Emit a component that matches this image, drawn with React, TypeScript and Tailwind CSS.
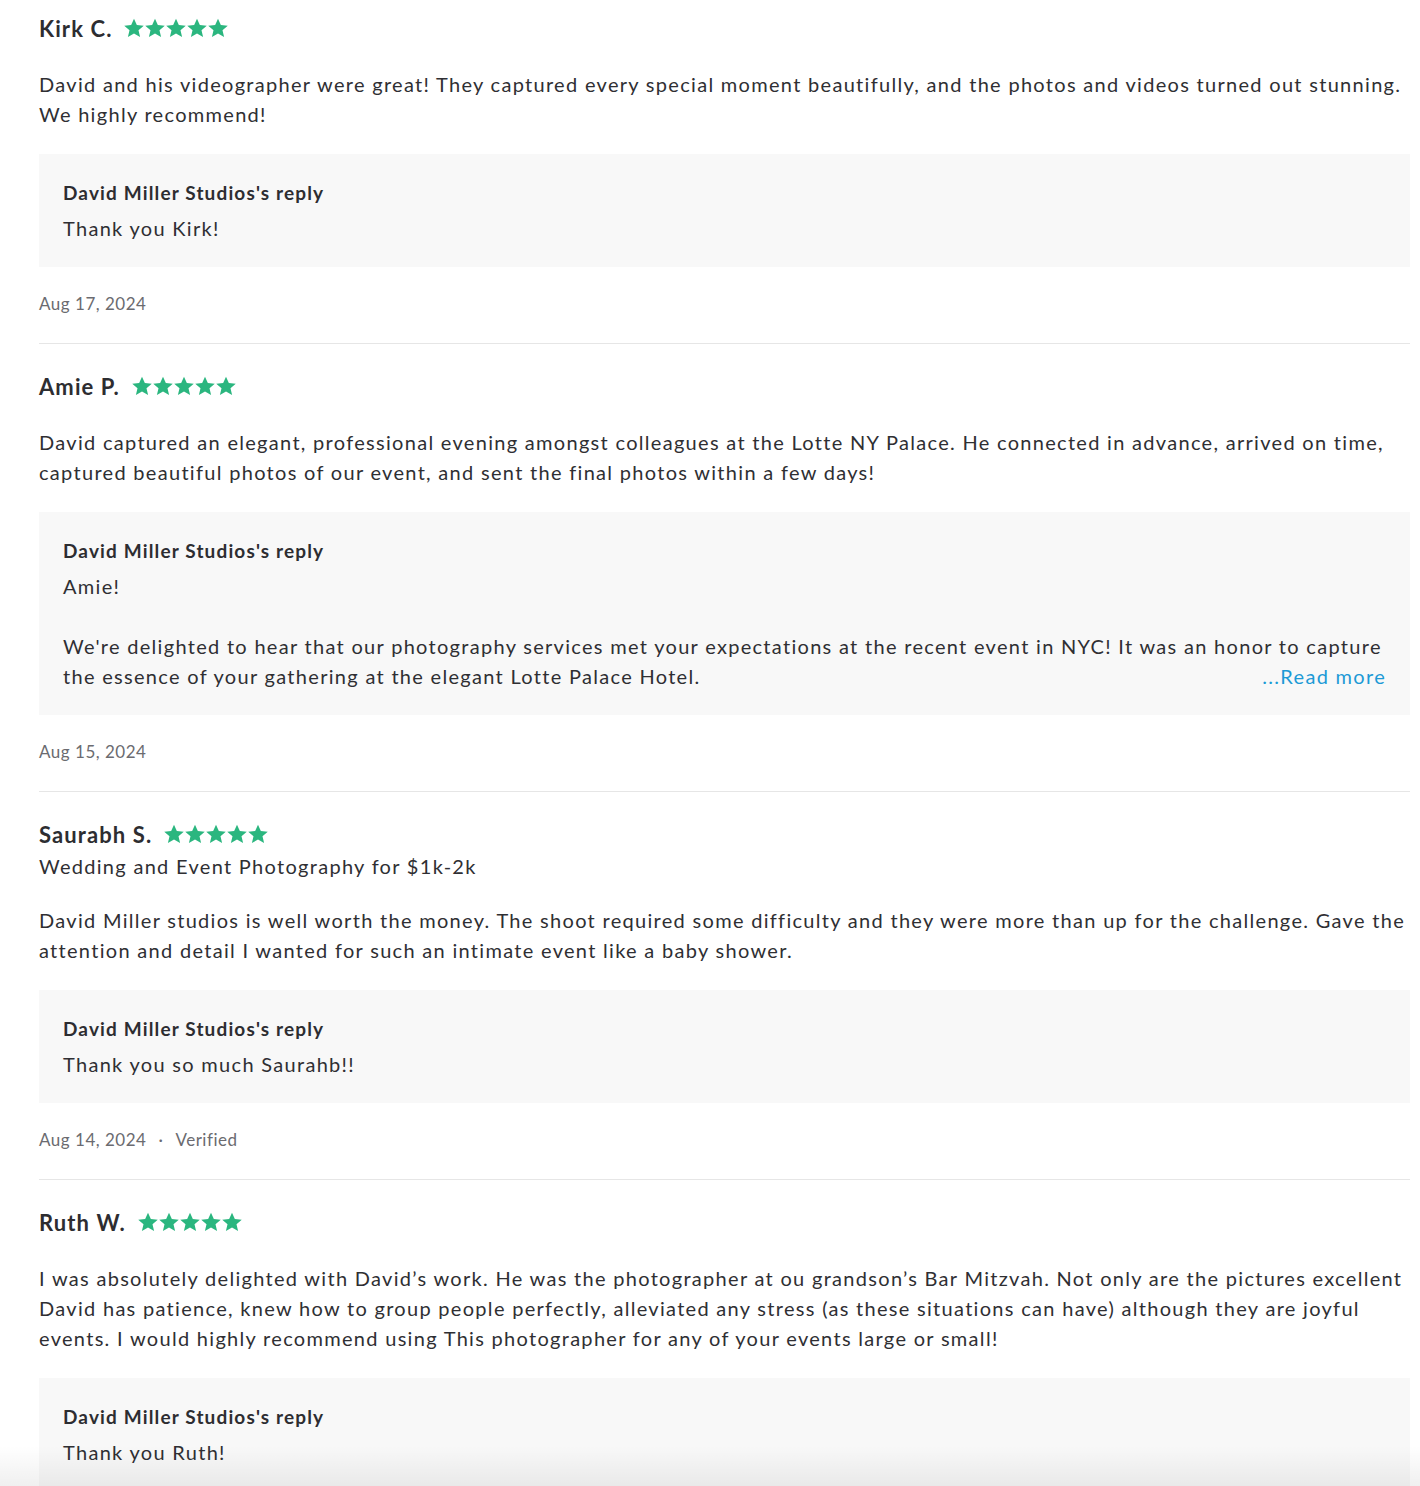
import React from "react";

type Review = {
  name: string;
  subtitle?: string;
  body: string;
  reply: string;
  readMore?: boolean;
  date: string;
  verified?: boolean;
};

const reviews: Review[] = [
  {
    name: "Kirk C.",
    body: "David and his videographer were great! They captured every special moment beautifully, and the photos and videos turned out stunning. We highly recommend!",
    reply: "Thank you Kirk!",
    date: "Aug 17, 2024",
  },
  {
    name: "Amie P.",
    body: "David captured an elegant, professional evening amongst colleagues at the Lotte NY Palace. He connected in advance, arrived on time, captured beautiful photos of our event, and sent the final photos within a few days!",
    reply:
      "Amie!\n\nWe're delighted to hear that our photography services met your expectations at the recent event in NYC! It was an honor to capture the essence of your gathering at the elegant Lotte Palace Hotel.",
    readMore: true,
    date: "Aug 15, 2024",
  },
  {
    name: "Saurabh S.",
    subtitle: "Wedding and Event Photography for $1k-2k",
    body: "David Miller studios is well worth the money. The shoot required some difficulty and they were more than up for the challenge. Gave the attention and detail I wanted for such an intimate event like a baby shower.",
    reply: "Thank you so much Saurahb!!",
    date: "Aug 14, 2024",
    verified: true,
  },
  {
    name: "Ruth W.",
    body: "I was absolutely delighted with David’s work. He was the photographer at ou grandson’s Bar Mitzvah. Not only are the pictures excellent David has patience, knew how to group people perfectly, alleviated any stress (as these situations can have) although they are joyful events. I would highly recommend using This photographer for any of your events large or small!",
    reply: "Thank you Ruth!",
    date: "",
  },
];

function Stars() {
  return (
    <div className="flex items-center gap-[1px]">
      {[0, 1, 2, 3, 4].map((i) => (
        <svg key={i} width="20" height="20" viewBox="0 0 24 24" className="fill-[#2bb67f]">
          <path d="M12 .8l3.4 7.6 8.3.8-6.3 5.5 1.9 8.2L12 18.6l-7.3 4.3 1.9-8.2L.3 9.2l8.3-.8z" />
        </svg>
      ))}
    </div>
  );
}

function ReviewItem({ r, last }: { r: Review; last: boolean }) {
  return (
    <div className={last ? "pt-[27px]" : "pt-[27px] pb-[27px] border-b border-[#e6e6e6]"}>
      <div className="flex items-center gap-3 h-[30px]">
        <span className="text-[22px] font-bold tracking-[0.05em] text-[#2d2d31]">{r.name}</span>
        <Stars />
      </div>
      {r.subtitle && (
        <p className="mt-[2px] text-[20px] leading-[30px] tracking-[0.065em] text-[#2f2f33]">{r.subtitle}</p>
      )}
      <p
        className={`${r.subtitle ? "mt-6" : "mt-[26px]"} text-[20px] leading-[30px] tracking-[0.065em] text-[#2f2f33]`}
      >
        {r.body}
      </p>
      <div className="mt-[25px] bg-[#f8f8f8] px-6 py-6">
        <p className="text-[19px] leading-[30px] font-bold tracking-[0.06em] text-[#2d2d31]">
          David Miller Studios's reply
        </p>
        <div className="relative mt-[5px]">
          <p className="text-[20px] leading-[30px] tracking-[0.065em] text-[#2f2f33] whitespace-pre-line">
            {r.reply}
          </p>
          {r.readMore && (
            <span className="absolute right-0 bottom-0 text-[20px] leading-[30px] tracking-[0.065em] text-[#1c9ad6] bg-[#f8f8f8]">
              ...Read more
            </span>
          )}
        </div>
      </div>
      {r.date && (
        <div className="mt-[25px] flex items-center h-6 text-[17px] tracking-[0.03em] text-[#6b6b70]">
          <span>{r.date}</span>
          {r.verified && (
            <>
              <span className="mx-3">·</span>
              <span>Verified</span>
            </>
          )}
        </div>
      )}
    </div>
  );
}

export default function App() {
  return (
    <div
      className="relative min-h-[1486px] bg-white overflow-hidden"
      style={{ fontFamily: "Lato, 'Noto Sans', sans-serif" }}
    >
      <div className="pl-[39px] pr-[10px] -mt-[14px]">
        {reviews.map((r, i) => (
          <ReviewItem key={r.name} r={r} last={i === reviews.length - 1} />
        ))}
      </div>
      <div className="absolute left-0 right-0 top-[1446px] h-10 bg-gradient-to-b from-transparent to-black/[0.06] pointer-events-none" />
    </div>
  );
}
